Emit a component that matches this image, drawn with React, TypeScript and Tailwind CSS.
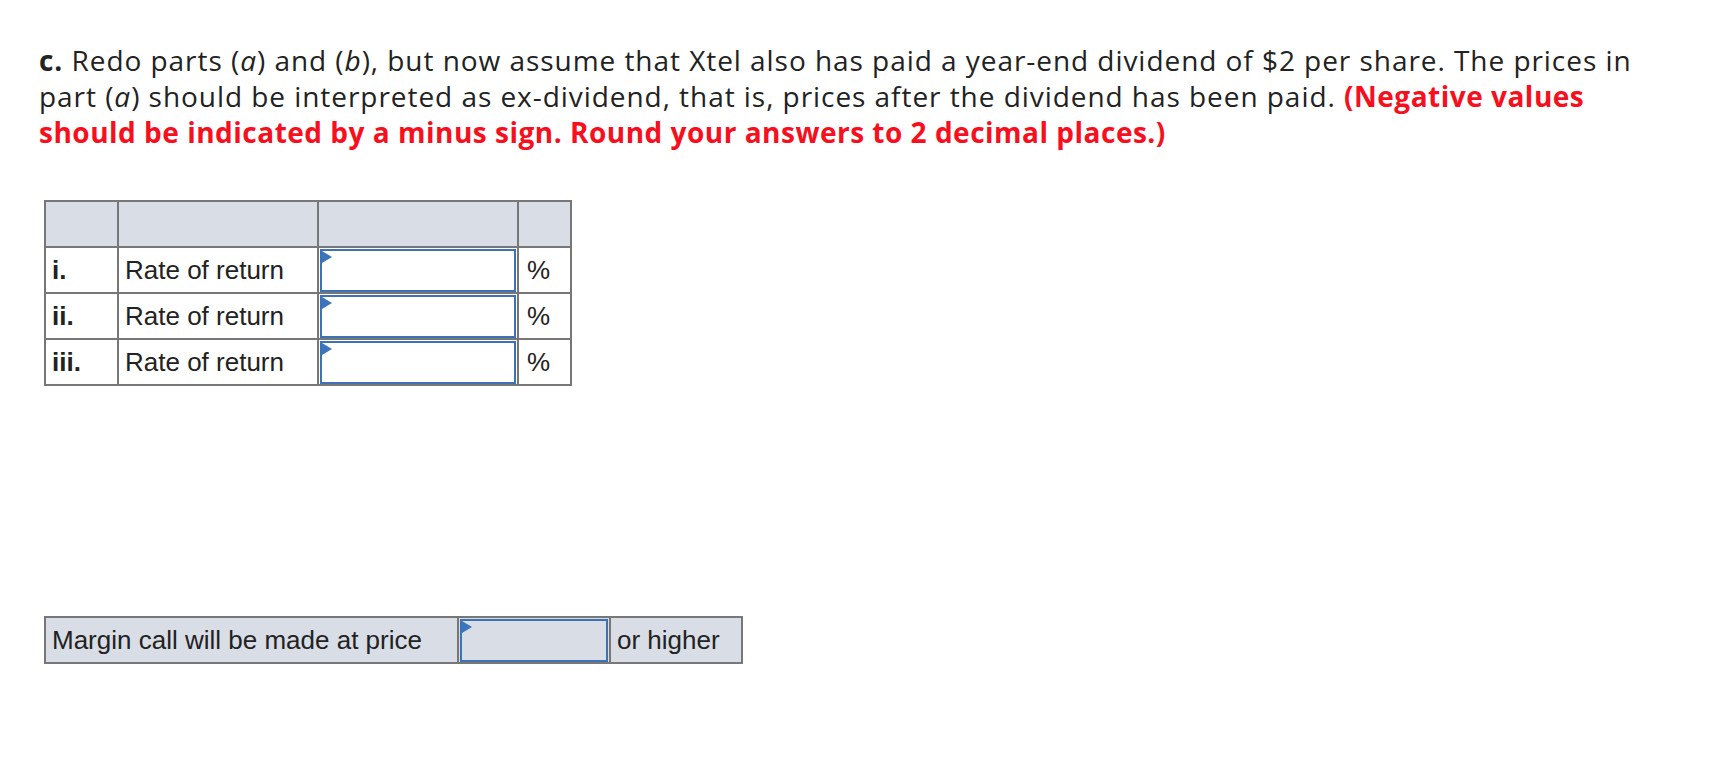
import { FC } from 'react';

const Flag: FC = () => (
  <svg className="absolute left-0 top-0" width="10" height="12" viewBox="0 0 10 12">
    <path d="M0 0 L10 6 L0 12 Z" fill="#3b76bd" />
  </svg>
);

const InputBox: FC<{ bg?: string }> = ({ bg = 'bg-white' }) => (
  <div className={`relative h-[43px] border-2 border-[#3d72b4] ${bg}`}>
    <Flag />
  </div>
);

const rows = ['i.', 'ii.', 'iii.'];

const App: FC = () => {
  return (
    <div className="min-h-screen bg-white pl-[39px] pt-[42px] text-[#222]">
      <p className="font-['Open_Sans',sans-serif] text-[28px] leading-[36px] tracking-[0.95px] whitespace-nowrap">
        <b>c.</b> Redo parts (<i>a</i>) and (<i>b</i>), but now assume that Xtel also has paid a year-end dividend of $2 per share. The prices in
        <br />
        part (<i>a</i>) should be interpreted as ex-dividend, that is, prices after the dividend has been paid.{' '}
        <b className="text-[#f70f1d] tracking-[0.5px]">(Negative values</b>
        <br />
        <b className="text-[#f70f1d] tracking-[0.5px]">should be indicated by a minus sign. Round your answers to 2 decimal places.)</b>
      </p>

      <table className="mt-[50px] ml-[5px] border-collapse font-['Liberation_Sans',Arial,sans-serif] text-[26px]">
        <tbody>
          <tr className="h-[46px] bg-[#d8dde6]">
            <td className="w-[73px] border-2 border-[#777]"></td>
            <td className="w-[200px] border-2 border-[#777]"></td>
            <td className="w-[200px] border-2 border-[#777]"></td>
            <td className="w-[53px] border-2 border-[#777]"></td>
          </tr>
          {rows.map((r) => (
            <tr className="h-[46px]" key={r}>
              <td className="border-2 border-[#777] px-[6px] font-bold">{r}</td>
              <td className="border-2 border-[#777] px-[6px]">Rate of return</td>
              <td className="border-2 border-[#777] p-0">
                <div className="px-px">
                  <InputBox />
                </div>
              </td>
              <td className="border-2 border-[#777] px-[8px]">%</td>
            </tr>
          ))}
        </tbody>
      </table>

      <table className="mt-[230px] ml-[5px] border-collapse bg-[#d8dde6] font-['Liberation_Sans',Arial,sans-serif] text-[26px]">
        <tbody>
          <tr className="h-[46px]">
            <td className="w-[413px] border-2 border-[#777] px-[6px]">Margin call will be made at price</td>
            <td className="w-[152px] border-2 border-[#777] p-0">
              <div className="px-px">
                <InputBox bg="bg-[#d8dde6]" />
              </div>
            </td>
            <td className="w-[132px] border-2 border-[#777] px-[6px]">or higher</td>
          </tr>
        </tbody>
      </table>
    </div>
  );
};

export default App;
